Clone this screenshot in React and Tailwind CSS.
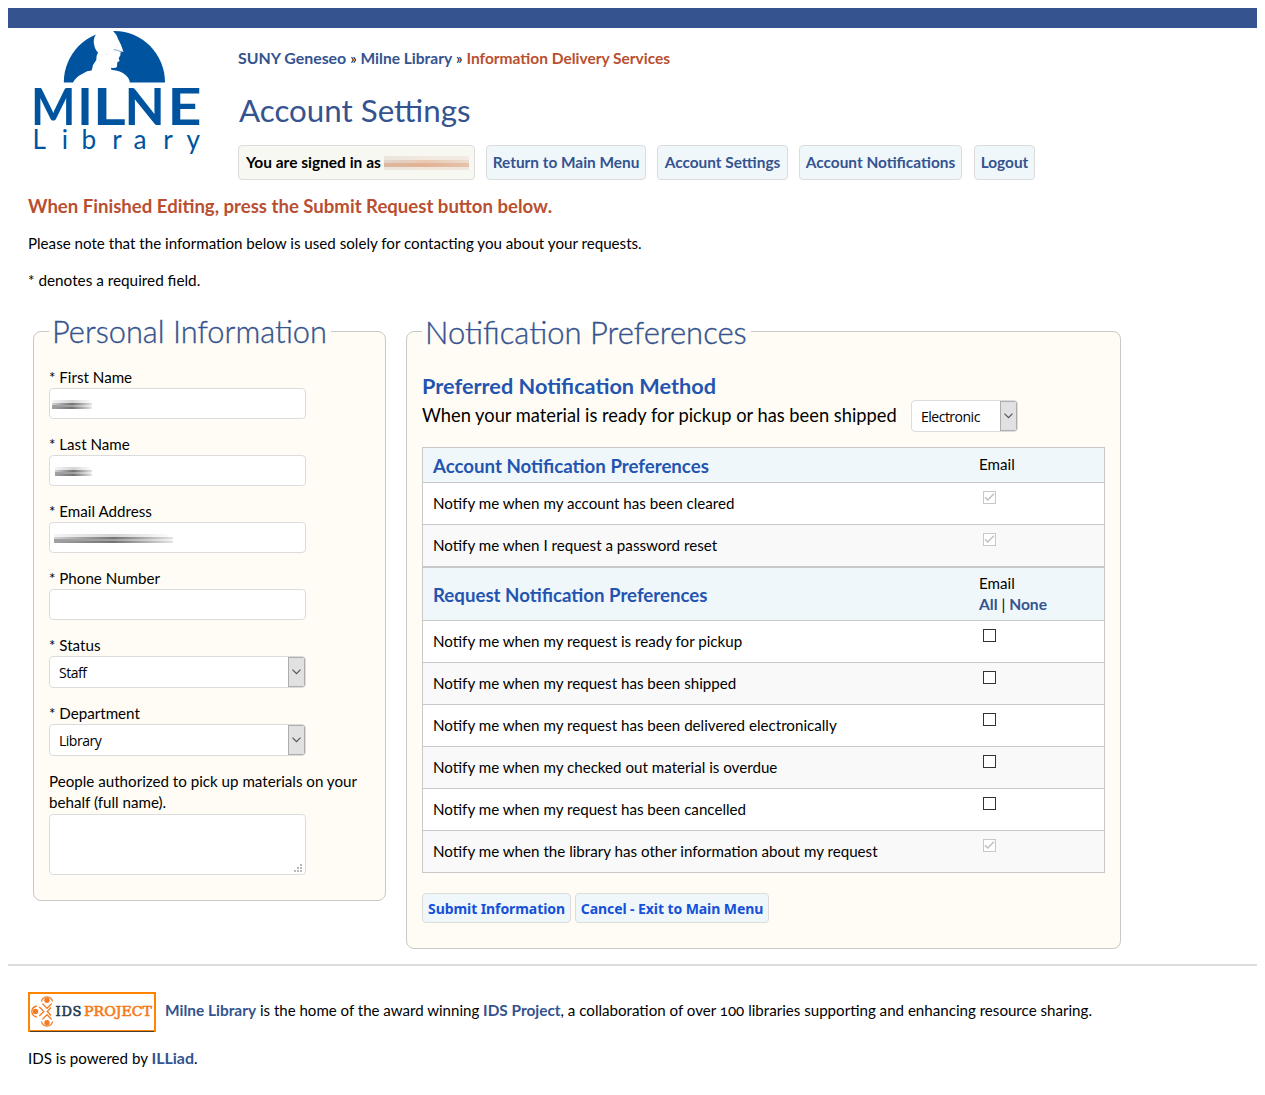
import React from "react";

const link = "font-bold text-[15.4px] text-[#34538f]";

function MilneLogo() {
  return (
    <svg className="block h-[152px] w-[210px] shrink-0" viewBox="28 28 210 152" role="img" aria-label="Milne Library">
      <path d="M63.8 82.5C63.8 54 86.5 31 114.4 31S165 54 165 82.5Z" fill="#00549f" />
      <path
        d="M95.7 28L95.7 34.7Q93 39 94 44Q95 50 98 52.5L96.6 56L96.3 60L93 65L91.7 70.6Q87 70.5 83 73.5Q76 76.5 72.7 83H129.8Q129.5 78 125.5 75Q121 70.8 111.3 69.8L111 67.8Q115.5 68.6 117 66.8L117.3 62.3L119.6 61L118.7 58.3L120.5 55L120.3 52.5L123.5 51.8Q121.5 45 118.3 39.5Q116.5 34 113.3 31.3V28Z"
        fill="#fff"
      />
      <path d="M113.5 49.5Q118 50.3 121 51.6L123 51.2" fill="none" stroke="#5a8fc2" strokeWidth=".8" />
      <path d="M99 60l1.5.5M105.5 54.5l2-.5" stroke="#dbe7f2" strokeWidth="1" />
      <text y="124.5" fill="#00549f" fontFamily="Lato, sans-serif" fontWeight="700" fontSize="52.4">
        <tspan x="30.9" textLength="44.5" lengthAdjust="spacingAndGlyphs">M</tspan>
        <tspan x="77.3">I</tspan>
        <tspan x="92.7" textLength="33" lengthAdjust="spacingAndGlyphs">L</tspan>
        <tspan x="124.5">N</tspan>
        <tspan x="167.5" textLength="34" lengthAdjust="spacingAndGlyphs">E</tspan>
      </text>
      <text x="32.4 61.7 81.5 112.3 133.5 163.3 186.5" y="149" fill="#00549f" fontFamily="Lato, sans-serif" fontSize="26.2">
        Library
      </text>
    </svg>
  );
}

function IdsLogo() {
  return (
    <svg className="block h-[40px] w-[128px] shrink-0" viewBox="28 992 128 40" role="img" aria-label="IDS Project">
      <rect x="29" y="993" width="126" height="38" fill="#fff" stroke="#ff8400" strokeWidth="2" />
      <path d="M30 1031.5H154" stroke="#4a4038" />
      <g fill="#f47b20">
        <circle cx="47" cy="1000.3" r="2.7" />
        <circle cx="47" cy="1022.7" r="2.7" />
        <circle cx="35.5" cy="1011.5" r="2.7" />
      </g>
      <g fill="none" stroke="#f47b20" strokeWidth="1.3">
        <path d="M41.5 1001.5Q42.3 997 47 996.8Q51.7 997 52.5 1001.5" />
        <path d="M41.5 1021.5Q42.3 1026 47 1026.2Q51.7 1026 52.5 1021.5" />
        <path d="M36.8 1006Q32 1007 31.8 1011.5Q32 1016 36.8 1017" />
        <path d="M42.3 1003.6L47 1008.3L51.7 1003.6M42.3 1019.4L47 1014.7L51.7 1019.4" />
        <path d="M39.3 1007L43.8 1011.5L39.3 1016M51 1007.5L47.3 1011.5L51 1015.5" />
      </g>
      <g fontFamily="DejaVu Serif, serif" fontSize="13" strokeWidth=".6">
        <text x="55.5" y="1016.3" textLength="26" fill="#283b50" stroke="#283b50">
          IDS
        </text>
        <text x="84" y="1016.3" textLength="68" fill="#f47b20" stroke="#f47b20" lengthAdjust="spacingAndGlyphs">
          PROJECT
        </text>
      </g>
    </svg>
  );
}

function Select({ value, className }) {
  return (
    <div className={"flex h-8 items-stretch justify-between overflow-hidden rounded border border-[#dcdcdc] bg-white " + className}>
      <span className="pl-[9px] pt-px font-['Open_Sans',sans-serif] text-[14px] leading-[30px] tracking-[-0.5px]">{value}</span>
      <span className="flex w-[17px] items-center justify-center border border-[#adadad] bg-[#e1e1e1]">
        <svg className="h-[6px] w-[9px]" viewBox="0 0 9 6" fill="none" stroke="#505050" strokeWidth="1.1">
          <path d="M.5 .7L4.5 4.7L8.5 .7" />
        </svg>
      </span>
    </div>
  );
}

function Field({ label, children, input }) {
  return (
    <div className="mb-[15px]">
      <div className="h-[21px] leading-[21px]">{label}</div>
      {input ? <div className="flex h-[31px] w-[257px] items-center rounded border border-[#dcdcdc] bg-white">{children}</div> : children}
    </div>
  );
}

function Smudge({ className }) {
  return (
    <span className={"flex flex-col justify-center blur-[0.6px] " + className}>
      <span className="h-[3px] bg-gradient-to-r from-neutral-100 via-neutral-300 to-white" />
      <span className="h-[2px] bg-gradient-to-r from-neutral-300 via-neutral-500 to-neutral-200" />
      <span className="h-[2px] bg-gradient-to-r from-neutral-400 via-neutral-400 to-neutral-100" />
      <span className="h-[2px] bg-gradient-to-r from-neutral-400 via-neutral-500 to-neutral-200" />
    </span>
  );
}

function Check({ disabled }) {
  return (
    <svg className="mt-2 ml-1 block h-[13px] w-[13px]" viewBox="0 0 13 13" fill="none">
      <rect x=".5" y=".5" width="12" height="12" fill="#fff" stroke={disabled ? "#c8c8c8" : "#333"} />
      {disabled && <path d="M2 6.2L4.7 9L11 2.8" stroke="#bdbdbd" strokeWidth="1.3" />}
    </svg>
  );
}

function Row({ text, disabled, shade }) {
  return (
    <div className={"flex h-[42px] border-t border-[#c8c8c8] " + (shade ? "bg-[#f9f9f9]" : "bg-white")}>
      <div className="w-[556px] pl-[10px] pt-[10px] leading-[21px]">{text}</div>
      <Check disabled={disabled} />
    </div>
  );
}

const requests = [
  "Notify me when my request is ready for pickup",
  "Notify me when my request has been shipped",
  "Notify me when my request has been delivered electronically",
  "Notify me when my checked out material is overdue",
  "Notify me when my request has been cancelled",
  "Notify me when the library has other information about my request",
];

const tab = "flex h-[35px] items-center justify-center rounded border border-[#dcdcdc] bg-[#f0f7fb] whitespace-nowrap ";
const button =
  "h-[30px] rounded border border-[#dcdcdc] bg-[#f0f7fb] font-['Noto_Sans',sans-serif] text-[14px] font-bold tracking-[-0.08px] text-[#1450d8] whitespace-nowrap ";
const legend =
  "h-[40px] pl-[3px] leading-[42px] font-light whitespace-nowrap text-[#34538f] [-webkit-text-stroke:0.35px_#34538f] ";

export default function App() {
  return (
    <div className="h-[1095px] bg-white p-2 font-[Lato,sans-serif] text-[15.15px] text-black">
      <div className="h-5 bg-[#34538f]" />
      <header className="flex pl-5">
        <MilneLogo />
        <div className="pt-5">
          <div className="h-[21px] leading-[19px] whitespace-nowrap">
            <a className="text-[15.9px] font-bold text-[#34538f]">SUNY Geneseo</a> »{" "}
            <a className="text-[15.55px] font-bold text-[#34538f]">Milne Library</a> »{" "}
            <span className="text-[15.5px] font-bold text-[#b94f31]">Information Delivery Services</span>
          </div>
          <h1 className="mt-[20px] h-[43px] pl-px text-[31.3px] leading-[42px] text-[#34538f]">Account Settings</h1>
          <nav className={"mt-[13px] flex " + link}>
            <div className="flex h-[35px] w-[237px] items-center rounded border border-[#dcdcdc] bg-[#f8f8f2] pl-[7px] text-[15.5px] whitespace-nowrap text-black">
              You are signed in as
              <span className="ml-[3px] flex h-[14px] w-[85px] flex-col blur-[0.7px]">
                <span className="h-[4px] bg-gradient-to-r from-[#e9e5dd] via-[#f3e8de] to-[#f1ebe4]" />
                <span className="h-[3px] bg-gradient-to-r from-[#e0d5ca] via-[#e8c9b3] to-[#ecdccf]" />
                <span className="h-[4px] bg-gradient-to-r from-[#deb79e] via-[#e2b294] to-[#e6c3ab]" />
                <span className="h-[3px] bg-gradient-to-r from-[#ebe6de] via-[#f1e6db] to-[#efe6de]" />
              </span>
            </div>
            <a className={tab + "ml-[11px] w-[160px]"}>Return to Main Menu</a>
            <a className={tab + "ml-[11px] w-[131px]"}>Account Settings</a>
            <a className={tab + "ml-[11px] w-[163px]"}>Account Notifications</a>
            <a className={tab + "ml-[12px] w-[61px]"}>Logout</a>
          </nav>
        </div>
      </header>

      <main className="pl-5">
        <h2 className="mt-[15px] h-[21px] text-[18.58px] leading-[22px] font-bold text-[#b94f31]">
          When Finished Editing, press the Submit Request button below.
        </h2>
        <p className="mt-[17px] h-[21px] leading-[21px]">
          Please note that the information below is used solely for contacting you about your requests.
        </p>
        <p className="mt-4 h-[21px] text-[15.3px] leading-[21px]">* denotes a required field.</p>

        <div className="mt-5 ml-[5px] flex items-start">
          <fieldset className="h-[590px] w-[353px] rounded-[8px] border border-[#c8c8c8] bg-[#fffcf5] px-[15px]">
            <legend className={legend + "w-[282px] text-[30.8px]"}>Personal Information</legend>
            <div className="pt-4">
              <Field label="* First Name" input>
                <Smudge className="ml-[2px] mt-[2px] w-[40px]" />
              </Field>
              <Field label="* Last Name" input>
                <Smudge className="ml-[5px] mt-[2px] w-[37px]" />
              </Field>
              <Field label="* Email Address" input>
                <Smudge className="ml-[4px] mt-[2px] w-[119px]" />
              </Field>
              <Field label="* Phone Number" input />
              <Field label="* Status">
                <Select value="Staff" className="w-[257px]" />
              </Field>
              <Field label="* Department">
                <Select value="Library" className="w-[257px]" />
              </Field>
              <div className="leading-[21px] whitespace-nowrap">
                People authorized to pick up materials on your
                <br />
                behalf (full name).
              </div>
              <div className="mt-px flex h-[61px] w-[257px] items-end justify-end rounded border border-[#dcdcdc] bg-white p-[2px] pr-[3px]">
                <svg className="h-[8px] w-[8px]" viewBox="0 0 8 8" fill="#b9b9b9">
                  <path d="M6 0h2v2h-2zM3 3h2v2h-2zM6 3h2v2h-2zM0 6h2v2h-2zM3 6h2v2h-2zM6 6h2v2h-2z" />
                </svg>
              </div>
            </div>
          </fieldset>

          <fieldset className="ml-5 h-[638px] w-[715px] rounded-[8px] border border-[#c8c8c8] bg-[#fffcf5] px-[15px]">
            <legend className={legend + "w-[329px] text-[31px]"}>Notification Preferences</legend>
            <h3 className="mt-[22px] h-[27px] text-[21.7px] leading-[27px] font-bold text-[#2355b0]">
              Preferred Notification Method
            </h3>
            <div className="flex h-8 items-center">
              <span className="w-[489px] text-[18.3px] whitespace-nowrap">
                When your material is ready for pickup or has been shipped
              </span>
              <Select value="Electronic" className="w-[107px]" />
            </div>

            <div className="mt-[15px] w-[683px] border border-[#c8c8c8]">
              <div className="flex h-[34px] bg-[#f0f7fb]">
                <h4 className="w-[556px] pl-[10px] text-[18.66px] leading-[36px] font-bold text-[#2355b0]">
                  Account Notification Preferences
                </h4>
                <span className="leading-[32px]">Email</span>
              </div>
              <Row text="Notify me when my account has been cleared" disabled />
              <Row text="Notify me when I request a password reset" disabled shade />
            </div>
            <div className="w-[683px] border border-[#c8c8c8]">
              <div className="flex h-[52px] bg-[#f0f7fb]">
                <h4 className="w-[556px] pl-[10px] text-[18.66px] leading-[54px] font-bold text-[#2355b0]">
                  Request Notification Preferences
                </h4>
                <div className="pt-[5px] leading-[21px]">
                  Email
                  <br />
                  <a className="text-[15.6px] font-bold text-[#34538f]">All</a> |{" "}
                  <a className="text-[15.6px] font-bold text-[#34538f]">None</a>
                </div>
              </div>
              {requests.map((text, i) => (
                <Row key={text} text={text} shade={i % 2 === 1} disabled={i === 5} />
              ))}
            </div>
            <div className="mt-5 flex gap-1">
              <button className={button + "w-[149px]"}>Submit Information</button>
              <button className={button + "w-[194px]"}>Cancel - Exit to Main Menu</button>
            </div>
          </fieldset>
        </div>
      </main>

      <footer className="mt-[15px] border-t-2 border-[#dcdcdc] pl-5">
        <div className="mt-[26px] flex h-[40px] whitespace-nowrap">
          <IdsLogo />
          <p className="ml-[9px] h-[36px] text-[15.05px] leading-[36px]">
            <a className="text-[15.45px] font-bold text-[#34538f]">Milne Library</a> is the home of the award winning{" "}
            <a className="text-[15.4px] font-bold text-[#34538f]">IDS Project</a>
            <span className="text-[15.12px]">
              , a collaboration of over <span className="oldstyle-nums">100</span> libraries supporting and enhancing
              resource sharing.
            </span>
          </p>
        </div>
        <p className="mt-[15px] h-[21px] text-[15.1px] leading-[21px]">
          IDS is powered by <a className="text-[16px] font-bold text-[#34538f]">ILLiad</a>.
        </p>
      </footer>
    </div>
  );
}
